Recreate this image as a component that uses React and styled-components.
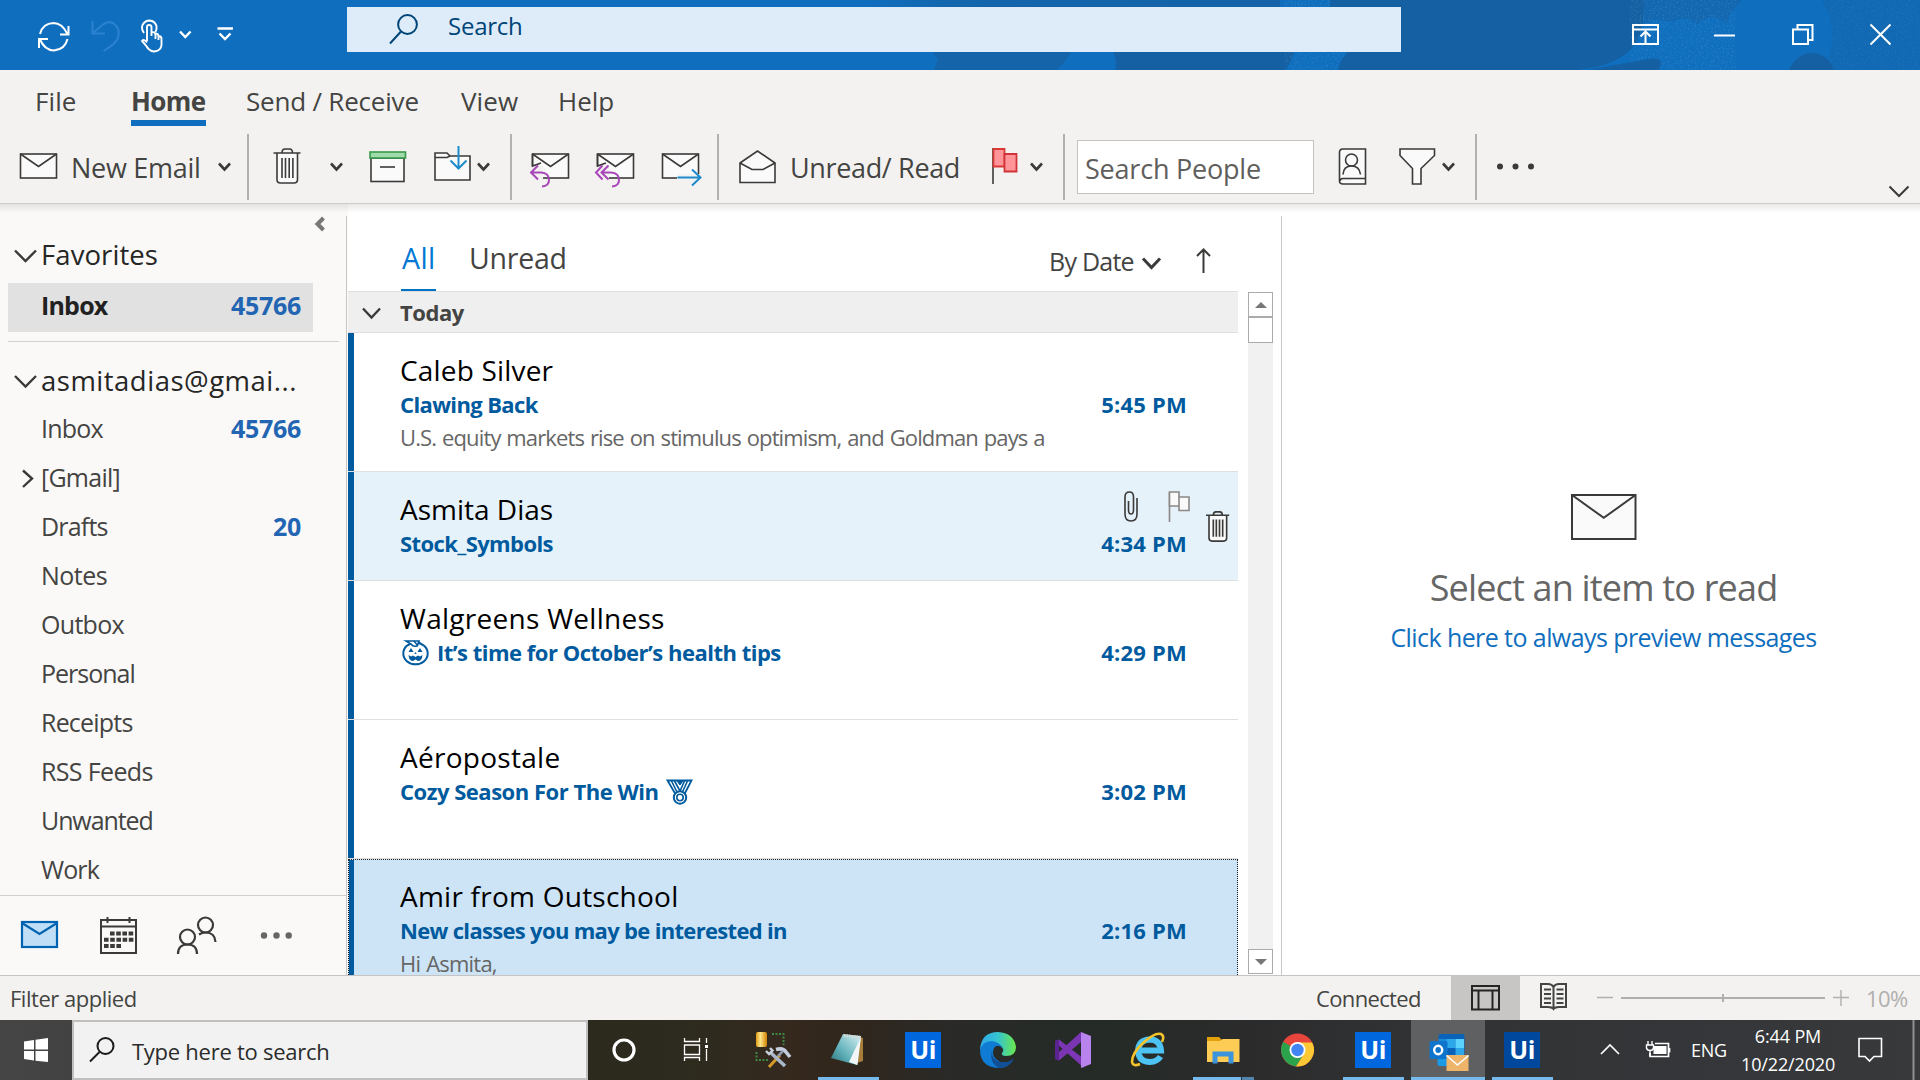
import React from 'react';
import styled, { createGlobalStyle, css } from 'styled-components';

const GlobalStyle = createGlobalStyle`
  *, *::before, *::after { box-sizing: border-box; }
  body { margin: 0; overflow: hidden; background: #fff; }
`;

const ink = '#444442';
const blue = '#106ebe';
const deep = '#005a9e';

const Window = styled.div`
  width: 1920px;
  height: 1080px;
  display: flex;
  flex-direction: column;
  overflow: hidden;
  font-family: 'Open Sans', 'Noto Sans', sans-serif;
  color: ${ink};
  background: #fff;
  white-space: nowrap;
`;

const Svg = styled.svg`
  display: block;
  flex: none;
  fill: none;
  stroke: ${(p) => p.$color || '#3b3a39'};
  stroke-width: ${(p) => p.$sw || 1.6};
`;

/* Icon cell: the view box starts at (x, y) of the window grid the strokes are drawn on. */
const Cell = ({ x, y, w, h, color, sw, children }) => (
  <Svg width={w} height={h} viewBox={`${x} ${y} ${w} ${h}`} $color={color} $sw={sw}>
    {children}
  </Svg>
);

const Text = styled.span`
  display: block;
  flex: none;
  width: ${(p) => (p.$w ? `${p.$w}px` : 'auto')};
  letter-spacing: ${(p) => p.$ls || 0}px;
`;

/* ---------- Title bar ---------- */
const TitleBar = styled.header`
  position: relative;
  isolation: isolate;
  height: 70px;
  flex: none;
  display: flex;
  background: ${blue};
`;
const TitleArt = styled.svg`
  position: absolute;
  z-index: -1;
  top: 0;
  right: 0;
`;
const QuickTools = styled.div`
  display: flex;
  width: 347px;
  padding-left: 20px;
`;
const SearchBox = styled.div`
  display: flex;
  width: 1054px;
  height: 45px;
  margin-top: 7px;
  background: #deecf9;
  color: #004578;
  font-size: 24px;
  line-height: 38px;
`;
const WindowButtons = styled.div`
  display: flex;
  margin-left: auto;
`;

const Art = () => (
  <TitleArt width="1100" height="70" viewBox="820 0 1100 70">
    <defs>
      <linearGradient id="fade" x1="0" x2="1">
        <stop offset="0" stopColor="#1560a2" stopOpacity="0" />
        <stop offset=".2" stopColor="#1560a2" stopOpacity=".65" />
        <stop offset="1" stopColor="#1560a2" stopOpacity=".8" />
      </linearGradient>
      <filter id="grain" x="0" y="0" width="100%" height="100%">
        <feTurbulence type="fractalNoise" baseFrequency=".6" numOctaves="2" seed="4" />
        <feColorMatrix values="0 0 0 0 .08  0 0 0 0 .38  0 0 0 0 .64  0 0 0 4 -2" />
      </filter>
    </defs>
    <rect x="870" y="0" width="410" height="10" fill="url(#fade)" />
    <path d="M932 50L938 60L934 70H1056Q1066 62 1072 50Z" fill="#1563a8" />
    <path d="M1112 50Q1118 60 1115 70H1286Q1292 60 1295 50Z" fill="#1560a2" />
    <rect x="1285" y="0" width="60" height="70" filter="url(#grain)" opacity=".25" />
    <path d="M1330 0H1644Q1646 36 1628 52Q1612 66 1578 70H1338Q1340 58 1350 50H1330Z" fill="#1560a2" />
    <path d="M1644 0H1742Q1730 12 1726 24Q1712 10 1698 24Q1684 14 1672 22Q1655 16 1644 24Z" fill="#1560a2" opacity=".5" />
    <rect x="1630" y="0" width="106" height="70" filter="url(#grain)" opacity=".25" />
    <path d="M1588 70L1648 59Q1661 57 1661 63L1659 70Z" fill="#1560a2" />
    <rect x="1815" y="0" width="105" height="70" fill="#1560a2" opacity=".4" />
    <rect x="1815" y="0" width="105" height="70" filter="url(#grain)" opacity=".15" />
    <ellipse cx="1783" cy="36" rx="49" ry="58" fill={blue} />
    <path d="M1789 70Q1797 53 1812 53Q1827 53 1834 70Z" fill="#1560a2" />
  </TitleArt>
);

/* ---------- Ribbon ---------- */
const Tabs = styled.nav`
  display: flex;
  align-items: flex-start;
  height: 64px;
  flex: none;
  padding-left: 35px;
  background: #f3f2f1;
`;
const Tab = styled.div`
  width: ${(p) => p.$w}px;
  margin-right: ${(p) => p.$gap}px;
  padding-top: 12px;
  border-bottom: 6px solid ${(p) => (p.$active ? blue : 'transparent')};
  font-size: 26px;
  line-height: 38px;
  letter-spacing: ${(p) => p.$ls}px;
  font-weight: ${(p) => (p.$active ? 700 : 400)};
`;
const Ribbon = styled.div`
  position: relative;
  z-index: 1;
  display: flex;
  align-items: flex-start;
  height: 70px;
  flex: none;
  background: #f3f2f1;
  border-bottom: 1px solid #cdcbc9;
  font-size: 27px;
  line-height: 67px;
  &::after {
    content: '';
    position: absolute;
    left: 0;
    right: 0;
    top: 70px;
    height: 9px;
    background: linear-gradient(rgba(0, 0, 0, 0.09), rgba(0, 0, 0, 0));
  }
`;
const Divider = styled.i`
  flex: none;
  width: 2px;
  height: 66px;
  background: #b3b0ad;
`;
const PeopleSearch = styled.div`
  width: 237px;
  height: 54px;
  margin: 6px 0 0 12px;
  padding-left: 7px;
  border: 1px solid #c4c2c0;
  background: #fff;
  color: #605e5c;
  line-height: 55px;
  letter-spacing: -0.21px;
`;

const RCell = (p) => <Cell y={134} h={66} {...p} />;
const Chevron = ({ x, y }) => <path d={`M${x} ${y}l5.5 6l5.5-6`} strokeWidth="2.6" />;
const Envelope = ({ x, y, w = 36, h = 24 }) => (
  <>
    <rect x={x} y={y} width={w} height={h} fill="#fafafa" />
    <path d={`M${x} ${y}l${w / 2} ${h * 0.52}l${w / 2} ${-h * 0.52}`} />
  </>
);
const Trash = ({ x, y, s = 1 }) => (
  <g transform={`translate(${x} ${y}) scale(${s})`}>
    <path d="M3.5 5V31.500q0 3.500 3.500 3.500h13.500q3.500 0 3.500-3.500V5" fill="#fafafa" />
    <path d="M0 5H27M8.500 5q0-4 3-4h4.500q3 0 3 4M8.500 10V30M12 10V30M15.700 10V30M19.400 10V30" />
  </g>
);

const RibbonBar = () => (
  <Ribbon>
    <RCell x={0} w={71}><Envelope x={20.5} y={154} /></RCell>
    <Text $w={137} $ls={-0.28}>New Email</Text>
    <RCell x={208} w={39}><Chevron x={219} y={163.500} /></RCell>
    <Divider />
    <RCell x={249} w={61}><Trash x={273.500} y={148} /></RCell>
    <RCell x={310} w={45}><Chevron x={331} y={163.500} /></RCell>
    <RCell x={355} w={65}>
      <rect x="371" y="158" width="33" height="23.500" fill="#fafafa" />
      <rect x="370" y="152" width="35.500" height="6" fill="#9fdcaa" stroke="#379a4b" />
      <path d="M380 167H395" />
    </RCell>
    <RCell x={420} w={90}>
      <path d="M435 180V153H447L450 156H470V180Z" fill="#fafafa" />
      <path d="M435 157.500H447L450 156" />
      <path d="M458.500 146V168M450.500 160.500L458.500 168.500L466.500 160.500" stroke="#1e8bcd" strokeWidth="2" />
      <Chevron x={478} y={163.500} />
    </RCell>
    <Divider />
    <RCell x={512} w={70}>
      <Envelope x={532.500} y={154} />
      <path d="M529 166H543V180H529Z" fill="#f3f2f1" stroke="none" />
      <path d="M532.500 154V166L541 163" />
      <path d="M538 165.500L531 172.500L538 179.500M531 172.500H541Q549 173 549 180Q549 186 542 186.500" stroke="#a846b9" strokeWidth="2" />
    </RCell>
    <RCell x={582} w={66}>
      <Envelope x={597.500} y={154} />
      <path d="M595 166H609V180H595Z" fill="#f3f2f1" stroke="none" />
      <path d="M597.500 154V166L606 163" />
      <path d="M602.500 165.500L596 172.500L602.500 179.500M608.500 165.500L601.500 172.500L608.500 179.500M601.500 172.500H611Q619 173 619 180Q619 186 612 186.500" stroke="#a846b9" strokeWidth="2" />
    </RCell>
    <RCell x={648} w={69}>
      <Envelope x={662.500} y={154} />
      <path d="M677 174H703V182H677Z" fill="#f3f2f1" stroke="none" />
      <path d="M677.500 177.500H700M692 169.500L700.500 177.500L692 185.500" stroke="#1e8bcd" strokeWidth="2" />
    </RCell>
    <Divider />
    <RCell x={719} w={71}>
      <path d="M740 163L757.500 151L775 163V182.500H740Z" fill="#fafafa" />
      <path d="M740 163L752 169.500H763L775 163" />
    </RCell>
    <Text $w={188} $ls={-0.35}>Unread/ Read</Text>
    <RCell x={978} w={85}>
      <path d="M993 148V184" />
      <path d="M993.500 149H1004.500V166.500H993.500Z" fill="#ff9599" stroke="#d93a35" strokeWidth="1.800" />
      <path d="M1004.500 154H1016.500V171.500H1004.500Z" fill="#ff9599" stroke="#d13438" strokeWidth="1.800" />
      <Chevron x={1031} y={163.500} />
    </RCell>
    <Divider />
    <PeopleSearch>Search People</PeopleSearch>
    <RCell x={1314} w={71}>
      <path d="M1365.500 149H1343Q1339.500 149 1339.500 152.500V181Q1339.500 184 1343 184H1365.500ZM1340 181Q1340 178.500 1343 178.500H1365.500" fill="#fafafa" />
      <ellipse cx="1351.500" cy="160" rx="6" ry="6" />
      <path d="M1343 174.500Q1343.500 166 1351.500 166Q1359.500 166 1360.500 174.500" />
    </RCell>
    <RCell x={1385} w={90}>
      <path d="M1400 149H1434.500V155.500L1421 168.500V184H1412.500V168.500L1400 155.500Z" fill="#fafafa" />
      <Chevron x={1443} y={163.500} />
    </RCell>
    <Divider />
    <RCell x={1477} w={400}>
      <g fill="#3b3a39" stroke="none">
        <circle cx="1500" cy="166.500" r="3" /><circle cx="1515.500" cy="166.500" r="3" /><circle cx="1531" cy="166.500" r="3" />
      </g>
    </RCell>
    <RCell x={1877} w={43}><path d="M1889.500 186.500L1899 196L1908.500 186.500" strokeWidth="2" /></RCell>
  </Ribbon>
);

/* ---------- Body ---------- */
const Body = styled.main`
  display: flex;
  height: 771px;
  flex: none;
`;
const Sidebar = styled.aside`
  display: flex;
  flex-direction: column;
  width: 346px;
  background: #faf9f8;
`;
const PaneEdge = styled.i`
  flex: none;
  width: ${(p) => p.$w}px;
  padding-top: 12px;
  background: ${(p) => p.$bg};
  &::before {
    content: '';
    display: block;
    width: 1px;
    height: 759px;
    background: #c9c7c5;
  }
`;
const SectionTitle = styled.div`
  display: flex;
  height: ${(p) => p.$h}px;
  padding-top: ${(p) => p.$pt || 0}px;
  color: #262625;
  font-size: 27.5px;
  line-height: 35px;
`;
const Folder = styled.div`
  display: flex;
  flex: none;
  width: 305px;
  height: 49px;
  margin-left: 8px;
  padding-right: 12px;
  background: ${(p) => (p.$selected ? '#e1e1e1' : 'transparent')};
  color: ${(p) => (p.$selected ? '#212121' : ink)};
  font-size: 25px;
  font-weight: ${(p) => (p.$selected ? 700 : 400)};
  line-height: 45px;
`;
const Count = styled.span`
  margin-left: auto;
  color: #2266b3;
  font-weight: 700;
  letter-spacing: -0.29px;
`;
const Rule = styled.i`
  flex: none;
  height: 1px;
  margin: 9px 7px 0 8px;
  background: #d2d0ce;
`;
const FolderList = styled.div`
  height: 489px;
  flex: none;
  overflow: hidden;
`;
const NavBar = styled.div`
  display: flex;
  height: 80px;
  border-top: 1px solid #d2d0ce;
`;

const folders = [
  { name: 'Inbox', ls: -0.8, count: '45766' },
  { name: '[Gmail]', ls: -0.75, open: true },
  { name: 'Drafts', ls: -0.8, count: '20' },
  { name: 'Notes', ls: -0.5 },
  { name: 'Outbox', ls: -0.7 },
  { name: 'Personal', ls: -1 },
  { name: 'Receipts', ls: -0.8 },
  { name: 'RSS Feeds', ls: -0.65 },
  { name: 'Unwanted', ls: -1.1 },
  { name: 'Work', ls: -0.9 },
];

const NCell = (p) => <Cell y={896} h={79} {...p} />;

const FolderPane = () => (
  <Sidebar>
    <Cell x={0} y={204} w={346} h={33} color="#777">
      <path d="M323.500 218L317.500 224L323.500 230" strokeWidth="4" />
    </Cell>
    <SectionTitle $h={46}>
      <Cell x={0} y={237} w={41} h={40}><path d="M15 250.500L25.500 261L36 250.500" strokeWidth="2.400" /></Cell>
      <Text $ls={0.08}>Favorites</Text>
    </SectionTitle>
    <Folder $selected>
      <Cell x={8} y={0} w={33} h={49} />
      <Text $ls={-0.8}>Inbox</Text>
      <Count>45766</Count>
    </Folder>
    <Rule />
    <SectionTitle $h={64} $pt={21}>
      <Cell x={0} y={363} w={41} h={40}><path d="M15 376L25.500 386.500L36 376" strokeWidth="2.400" /></Cell>
      <Text $ls={0.5}>asmitadias@gmai...</Text>
    </SectionTitle>
    <FolderList>
      {folders.map((f) => (
        <Folder key={f.name}>
          <Cell x={8} y={455} w={33} h={49}>
            {f.open && <path d="M23 470.500L32 478.500L23 487" strokeWidth="2.400" />}
          </Cell>
          <Text $ls={f.ls}>{f.name}</Text>
          {f.count && <Count>{f.count}</Count>}
        </Folder>
      ))}
    </FolderList>
    <NavBar>
      <NCell x={0} w={80} color="#0063b1">
        <rect x="22" y="922" width="35" height="25" fill="#c0def5" strokeWidth="2.200" />
        <path d="M22 923L39.500 934L57 923" strokeWidth="2.200" />
      </NCell>
      <NCell x={80} w={78}>
        <rect x="101" y="920" width="35" height="33" strokeWidth="2" />
        <path d="M101 926.500H136M107.500 917V923M129.500 917V923" strokeWidth="2" />
        <path d="M110 933.500H134M104 939.700H134M104 945.900H121" strokeWidth="4" strokeDasharray="4.600 1.600" />
      </NCell>
      <NCell x={158} w={88} sw={2.2}>
        <ellipse cx="187.500" cy="937" rx="7.500" ry="7.500" />
        <path d="M178 954Q178 944.500 187.500 944.500Q197 944.500 197 954" />
        <ellipse cx="205.500" cy="925" rx="7.500" ry="7.500" />
        <path d="M199 934.500Q202 932.500 205.500 932.500Q215 932.500 215.500 942" />
      </NCell>
      <NCell x={246} w={99} color="none">
        <g fill="#666">
          <circle cx="264" cy="935.500" r="3.200" /><circle cx="276.500" cy="935.500" r="3.200" /><circle cx="288.700" cy="935.500" r="3.200" />
        </g>
      </NCell>
    </NavBar>
  </Sidebar>
);

/* ---------- Message list ---------- */
const ListPane = styled.section`
  display: flex;
  flex-direction: column;
  width: 933px;
`;
const FilterRow = styled.div`
  display: flex;
  align-items: flex-start;
  height: 87px;
  padding-left: 53px;
  font-size: 28.5px;
  line-height: 60px;
`;
const FilterTab = styled.div`
  width: ${(p) => p.$w}px;
  height: 87px;
  margin-right: 32px;
  padding: 24px 0 0 1px;
  color: ${(p) => (p.$active ? '#0078d4' : ink)};
  border-bottom: 2px solid ${(p) => (p.$active ? '#0072c6' : 'transparent')};
  letter-spacing: ${(p) => p.$ls}px;
`;
const SortBy = styled.div`
  display: flex;
  margin-left: 448px;
  padding-top: 27px;
  font-size: 25px;
`;
const ListArea = styled.div`
  display: flex;
  height: 684px;
`;
const Messages = styled.div`
  width: 890px;
  height: 684px;
  overflow: hidden;
`;
const GroupHeader = styled.div`
  display: flex;
  height: 42px;
  border: solid #dedede;
  border-width: 1px 0;
  background: #efefef;
  font-size: 22px;
  font-weight: 700;
  line-height: 41px;
`;
const Message = styled.article`
  display: flex;
  height: ${(p) => p.$h}px;
  border-bottom: 1px solid #dfdfdf;
  background: ${(p) => p.$bg || '#fff'};
  ${(p) => p.$focused && css`
    border: 1px dotted #222;
    border-bottom: 0;
  `}
`;
const UnreadBar = styled.i`
  flex: none;
  width: ${(p) => (p.$focused ? 5 : 6)}px;
  background: ${deep};
`;
const Summary = styled.div`
  flex: 1;
  padding: ${(p) => (p.$focused ? 19 : 20)}px 0 0 46px;
`;
const Sender = styled.div`
  color: #000;
  font-size: 28px;
  line-height: 34px;
  letter-spacing: ${(p) => p.$ls}px;
`;
const Subject = styled.div`
  display: flex;
  color: ${deep};
  font-size: 22px;
  font-weight: 700;
  line-height: 35px;
`;
const Preview = styled.div`
  color: #666;
  font-size: 22px;
  line-height: 31px;
  letter-spacing: ${(p) => p.$ls}px;
  word-spacing: 1px;
`;
const Meta = styled.div`
  display: flex;
  flex-direction: column;
  width: 98px;
  height: 100px;
  margin-top: ${(p) => (p.$focused ? -1 : 0)}px;
`;
const Flags = styled.div`
  height: 54px;
`;
const Time = styled.div`
  padding-right: 4px;
  text-align: right;
  color: ${deep};
  font-size: 22px;
  font-weight: 700;
  line-height: 35px;
  letter-spacing: 0.2px;
`;
const RowAction = styled.div`
  width: ${(p) => (p.$focused ? 46 : 47)}px;
`;

const Pumpkin = () => (
  <Cell x={400} y={636} w={37} h={35} color={deep}>
    <ellipse cx="415.500" cy="654.500" rx="12.200" ry="10.800" strokeWidth="2" />
    <path d="M406 642H419L417 647Q413 648 411 645Z" strokeWidth="1.600" fill="#fff" />
    <path d="M414 642L418 647M419 643L421 645" strokeWidth="1.400" />
    <g fill={deep} stroke="none">
      <path d="M408.500 653L411 649L413.500 653ZM417.500 653L420 649L422.500 653ZM414.300 655L415.500 653L416.700 655Z" />
      <path d="M408.500 656L411 657.500L413 656.500L415.500 658L418 656.500L420 657.500L422.500 656Q422 662 418 662L415.500 660.500L413 662Q409 662 408.500 656Z" />
    </g>
  </Cell>
);
const Medal = () => (
  <Cell x={658} y={774} w={38} h={35} color={deep}>
    <path d="M667.500 780.500H691.500L684 795H676Z" strokeWidth="1.800" />
    <path d="M671.500 781L678 794M687.500 781L681.500 794M674.500 781L680 791L684.500 781" strokeWidth="1.600" />
    <path d="M677 781L680 785L683 781Z" fill={deep} strokeWidth="1" />
    <circle cx="680" cy="797.500" r="6.200" fill="#fff" strokeWidth="2" />
    <circle cx="680" cy="797.500" r="3.200" strokeWidth="1.600" />
  </Cell>
);

const mails = [
  { from: 'Caleb Silver', ls: 0.18, subject: 'Clawing Back', sls: -0.62, time: '5:45 PM', h: 139, preview: 'U.S. equity markets rise on stimulus optimism, and Goldman pays a', pls: -0.87 },
  { from: 'Asmita Dias', ls: 0, subject: 'Stock_Symbols', sls: -0.6, time: '4:34 PM', h: 109, bg: '#e5f2fa', hover: true },
  { from: 'Walgreens Wellness', ls: 0.28, subject: 'It’s time for October’s health tips', sls: -0.5, time: '4:29 PM', h: 139, before: <Pumpkin /> },
  { from: 'Aéropostale', ls: 0.28, subject: 'Cozy Season For The Win', sls: -0.48, time: '3:02 PM', h: 139, after: <Medal /> },
  { from: 'Amir from Outschool', ls: 0.24, subject: 'New classes you may be interested in', sls: -0.68, time: '2:16 PM', h: 116, bg: '#cde4f7', focused: true, preview: 'Hi Asmita,', pls: -0.78 },
];

const Scrollbar = styled.div`
  display: flex;
  flex-direction: column;
  width: 25px;
  height: 682px;
  margin: 1px 0 0 10px;
  background: #f1f1f1;
`;
const ScrollButton = styled.div`
  display: flex;
  align-items: center;
  justify-content: center;
  height: ${(p) => p.$h}px;
  margin-top: ${(p) => (p.$end ? 'auto' : 0)};
  border: 1px solid #ababab;
  background: #fff;
`;
const Arrow = styled.i`
  border: solid transparent;
  border-width: 0 6px;
  ${(p) => (p.$down ? 'border-top: 6px solid #777;' : 'border-bottom: 6px solid #777;')}
`;

const Messaging = () => (
  <ListPane>
    <FilterRow>
      <FilterTab $active $w={35} $ls={0.4}>All</FilterTab>
      <FilterTab $w={101} $ls={-0.25}>Unread</FilterTab>
      <SortBy>
        <Text $w={84} $ls={-0.75}>By Date</Text>
        <Cell x={1133} y={231} w={47} h={60}><path d="M1143 258.500L1151.500 267.500L1160 258.500" strokeWidth="3" /></Cell>
        <Cell x={1180} y={231} w={47} h={60}><path d="M1203.500 249V273M1197 256L1203.500 249.500L1210 256" strokeWidth="2" /></Cell>
      </SortBy>
    </FilterRow>
    <ListArea>
      <Messages>
        <GroupHeader>
          <Cell x={348} y={292} w={52} h={40}><path d="M363 308.500L371.500 317.500L380 308.500" strokeWidth="2.400" /></Cell>
          <Text $ls={-0.45}>Today</Text>
        </GroupHeader>
        {mails.map((m) => (
          <Message key={m.from} $h={m.h} $bg={m.bg} $focused={m.focused}>
            <UnreadBar $focused={m.focused} />
            <Summary $focused={m.focused}>
              <Sender $ls={m.ls}>{m.from}</Sender>
              <Subject>{m.before}<Text $ls={m.sls}>{m.subject}</Text>{m.after}</Subject>
              {m.preview && <Preview $ls={m.pls}>{m.preview}</Preview>}
            </Summary>
            <Meta $focused={m.focused}>
              <Flags>
                {m.hover && (
                  <Cell x={1093} y={472} w={98} h={54}>
                    <path d="M1125 497V514Q1125 521 1131 521Q1137 521 1137 514V498M1125 499V497Q1125 492 1129.500 492Q1133.500 492 1133.500 497V510Q1133.500 514 1131 514Q1128.500 514 1128.500 510V501" />
                    <g stroke="#8a8886" fill="#fafafa">
                      <path d="M1169.500 522V492" />
                      <path d="M1169.500 492H1179V506H1169.500ZM1179 497H1189V510.500H1179Z" />
                    </g>
                  </Cell>
                )}
              </Flags>
              <Time>{m.time}</Time>
            </Meta>
            <RowAction $focused={m.focused}>
              {m.hover && <Cell x={1191} y={472} w={47} h={108} sw={1.9}><Trash x={1206} y={511} s={0.86} /></Cell>}
            </RowAction>
          </Message>
        ))}
      </Messages>
      <Scrollbar>
        <ScrollButton $h={25}><Arrow /></ScrollButton>
        <ScrollButton $h={26} />
        <ScrollButton $h={25} $end><Arrow $down /></ScrollButton>
      </Scrollbar>
    </ListArea>
  </ListPane>
);

/* ---------- Reading pane ---------- */
const ReadingPane = styled.section`
  display: flex;
  flex-direction: column;
  align-items: center;
  width: 638px;
  padding: 289px 0 0 5px;
  color: #666;
`;
const Prompt = styled.div`
  margin-top: 25px;
  font-size: 36px;
  line-height: 46px;
  letter-spacing: -0.82px;
`;
const PreviewLink = styled.div`
  margin-top: 8px;
  color: #106ebe;
  font-size: 25px;
  line-height: 36px;
  letter-spacing: -0.58px;
`;

/* ---------- Status bar ---------- */
const StatusBar = styled.footer`
  display: flex;
  height: 45px;
  flex: none;
  border-top: 1px solid #c6c4c2;
  background: #f3f2f1;
  font-size: 22px;
  line-height: 45px;
`;
const StatusText = styled.span`
  width: ${(p) => p.$w}px;
  padding-left: ${(p) => p.$pl}px;
  color: ${(p) => p.$color || ink};
  letter-spacing: ${(p) => p.$ls}px;
`;
const ViewButton = styled.div`
  width: 69px;
  background: ${(p) => (p.$active ? '#c8c6c4' : 'transparent')};
`;
const SCell = (p) => <Cell y={976} h={44} {...p} />;

/* ---------- Taskbar ---------- */
const Taskbar = styled.footer`
  display: flex;
  height: 60px;
  flex: none;
  background: linear-gradient(90deg, #454545 0, #424242 72px, #2b2a1d 588px, #2d2b1f 680px, #35291e 790px, #30261c 850px, #2a2a28 950px, #242b26 1090px, #2b2b2c 1240px, #313233 1400px, #343639 1700px, #37393b 1920px);
  color: #fff;
`;
const TaskSearch = styled.div`
  display: flex;
  width: 516px;
  border: 2px solid #c0c0c0;
  background: #f2f2f2;
  color: #2b2b2b;
  font-size: 22px;
  line-height: 59px;
  letter-spacing: -0.26px;
`;
const TaskButton = styled.div`
  display: flex;
  flex-direction: column;
  width: ${(p) => p.$w || 75}px;
  height: 60px;
  background: ${(p) => (p.$active ? '#5f6061' : 'transparent')};
`;
const Marks = styled.div`
  display: flex;
  gap: 1px;
  margin-left: ${(p) => (p.$flush ? 0 : 7)}px;
`;
const RunningMark = styled.i`
  width: ${(p) => p.$w || 61}px;
  height: 3px;
  background: ${(p) => p.$bg || '#76b9ed'};
`;
const UiTile = styled.div`
  width: 36px;
  height: 36px;
  margin: 12px 0 9px 19px;
  background: ${(p) => p.$bg};
  font: 700 25px/35px 'Open Sans', sans-serif;
  letter-spacing: -0.5px;
  text-align: center;
`;
const Language = styled.span`
  width: 50px;
  font-size: 18px;
  line-height: 61px;
  letter-spacing: -0.28px;
`;
const Clock = styled.div`
  width: 94px;
  padding-top: 2px;
  font-size: 18px;
  line-height: 28px;
  letter-spacing: -0.14px;
  text-align: center;
`;
const TCell = (p) => <Cell y={1020} h={57} {...p} />;

const Tasks = () => (
  <Taskbar>
    <TCell x={0} w={72} color="none">
      <path d="M24 1041.500L34 1040V1049.500H24ZM35.500 1039.800L48 1038V1049.500H35.500ZM24 1051H34V1060.500L24 1059ZM35.500 1051H48V1062L35.500 1060.700Z" fill="#fff" />
    </TCell>
    <TaskSearch>
      <Cell x={74} y={1022} w={58} h={56} color="#1b1b1b" sw={2}>
        <circle cx="105.500" cy="1046" r="8" />
        <path d="M99.500 1052L90 1061.500" />
      </Cell>
      Type here to search
    </TaskSearch>
    <TaskButton $w={72}>
      <TCell x={588} w={72} color="#fff" sw={3.2}><circle cx="624" cy="1050" r="10" /></TCell>
    </TaskButton>
    <TaskButton>
      <TCell x={660} w={75} color="#fff" sw={1.3}>
        <path d="M684.500 1038V1041.500H699.500V1038M684.500 1061V1057.500H699.500V1061M684.500 1045H699.500V1054.500H684.500ZM706.500 1038V1043M706.500 1049V1061" />
        <rect x="705" y="1045" width="3" height="3" fill="#fff" stroke="none" />
      </TCell>
    </TaskButton>
    <TaskButton $w={76}>
      <TCell x={735} w={75} color="none">
        <defs>
          <linearGradient id="gold" x1="0" x2="1"><stop offset="0" stopColor="#e09c10" /><stop offset=".4" stopColor="#ffe58a" /><stop offset="1" stopColor="#d08200" /></linearGradient>
        </defs>
        <rect x="756" y="1032" width="11" height="15" rx="2" fill="url(#gold)" />
        <path d="M772 1034H783.500V1045M756.500 1052V1060H768" stroke="#3d8a42" strokeWidth="2" strokeDasharray="2 1.500" />
        <path d="M769 1067L780 1055" stroke="#d59b2a" strokeWidth="3" />
        <path d="M770 1052L785 1066" stroke="#aab6ca" strokeWidth="3.600" />
        <path d="M766 1051L769 1054L772.500 1050.500L770 1048" stroke="#c8d1de" strokeWidth="2.400" />
        <path d="M776 1049.500Q783 1047.500 786 1052L790 1057" stroke="#c5cedd" strokeWidth="3.600" />
        <path d="M783 1051L778 1056" stroke="#8f9bb0" strokeWidth="2.500" />
      </TCell>
    </TaskButton>
    <TaskButton>
      <TCell x={811} w={75} color="none">
        <defs>
          <linearGradient id="page" x1="1" y1="0" x2="0" y2="1"><stop offset="0" stopColor="#d9f2f4" /><stop offset=".6" stopColor="#5fb0b9" /><stop offset="1" stopColor="#2b6f78" /></linearGradient>
        </defs>
        <path d="M860 1037L863 1038V1061L857 1063Z" fill="#a77d3a" />
        <path d="M843 1034L861 1036L857 1065L831 1058Z" fill="url(#page)" />
        <path d="M861 1037L857.500 1065L849 1062Z" fill="#f2f6f7" />
        <path d="M844 1035.500L861 1037.500" stroke="#d7d7d7" strokeWidth="3" strokeDasharray="1.500 1" />
      </TCell>
      <Marks><RunningMark /></Marks>
    </TaskButton>
    <TaskButton><UiTile $bg="#0067df">Ui</UiTile></TaskButton>
    <TaskButton>
      <TCell x={961} w={75} color="none">
        <defs>
          <linearGradient id="edgeTop" x1="0" x2="1"><stop offset="0" stopColor="#2fa8ea" /><stop offset=".5" stopColor="#35c4cf" /><stop offset="1" stopColor="#6be84a" /></linearGradient>
        </defs>
        <path d="M980 1050Q981 1032 998 1032Q1014 1033 1016 1047Q1016 1056 1006 1056Q1001 1056 1002 1053Q1005 1050 1001 1046Q994 1039 985 1044Z" fill="url(#edgeTop)" />
        <path d="M980 1051Q982 1041 992 1041Q1000 1042 1003 1049Q998 1043 994 1048Q990 1056 1000 1062Q1008 1064 1013.500 1059Q1009 1068 998 1068Q981 1067 980 1051Z" fill="#0f7bd3" />
        <path d="M992 1051Q991 1060 1001 1062Q1009 1063 1014 1058.500Q1009 1068 999 1068Q989 1063 992 1051Z" fill="#114f97" />
      </TCell>
    </TaskButton>
    <TaskButton>
      <TCell x={1036} w={75} color="none">
        <path d="M1055 1041L1059 1039.500L1084 1059V1068L1056 1043Z" fill="#7d36b5" />
        <path d="M1055 1041V1059L1059 1060.500L1081 1042V1032L1059 1052V1045Z" fill="#7a35b3" />
        <path d="M1055 1041L1059 1039.500V1060.500L1055 1059Z" fill="#5b2390" />
        <path d="M1081 1032L1091 1036V1064L1081 1068Z" fill="#b983ee" />
      </TCell>
    </TaskButton>
    <TaskButton>
      <TCell x={1111} w={75} color="none">
        <path d="M1138 1050.500H1161Q1160 1039.500 1149.500 1039.500Q1138.500 1040 1138 1051Q1139 1062 1150 1062Q1157 1062 1160.500 1056.500" stroke="#4cc3f3" strokeWidth="6" />
        <path d="M1140 1064Q1133 1067 1132 1062Q1132 1053 1143 1043Q1155 1032 1161 1034Q1165 1036 1162 1042" stroke="#f5c32c" strokeWidth="2.600" />
      </TCell>
    </TaskButton>
    <TaskButton>
      <TCell x={1186} w={75} color="none">
        <path d="M1207 1037H1219L1222 1040H1221V1046H1207Z" fill="#e2a10c" />
        <path d="M1207 1041H1220L1222.500 1039H1239.500V1062H1207Z" fill="#fccc55" />
        <path d="M1212.500 1063.500V1051.500H1233.500V1063.500H1228.500V1056.500H1217.500V1063.500Z" fill="#3b94dc" />
      </TCell>
      <Marks><RunningMark $w={48} /><RunningMark $w={12} $bg="#5285ad" /></Marks>
    </TaskButton>
    <TaskButton>
      <TCell x={1261} w={75} color="none">
        <circle cx="1297.500" cy="1050" r="16.500" fill="#e8453c" />
        <path d="M1297.500 1050L1283.200 1041.800A16.500 16.500 0 0 0 1296 1066.400L1304 1054Z" fill="#2ba24c" />
        <path d="M1297.500 1042.500H1312.200A16.500 16.500 0 0 1 1296 1066.400L1304 1054Z" fill="#fcc934" />
        <circle cx="1297.500" cy="1050" r="8" fill="#fff" />
        <circle cx="1297.500" cy="1050" r="6.200" fill="#4285f4" />
      </TCell>
    </TaskButton>
    <TaskButton><UiTile $bg="#0067df">Ui</UiTile><Marks><RunningMark /></Marks></TaskButton>
    <TaskButton $active $w={74}>
      <TCell x={1411.5} w={73} color="none">
        <rect x="1439" y="1034" width="26" height="32" rx="2" fill="#0a63b8" />
        <path d="M1439 1039H1448V1048H1439Z" fill="#1a8ad6" />
        <path d="M1447 1039H1456V1048H1447Z" fill="#2ba7ea" />
        <path d="M1456 1039H1464.500V1048H1456Z" fill="#5ad2fb" />
        <path d="M1456 1048H1464.500V1056H1456Z" fill="#2ba7ea" />
        <path d="M1438 1058H1450V1066H1440Q1438 1066 1438 1064Z" fill="#1a9ae6" />
        <rect x="1430" y="1041" width="18" height="18" rx="1.500" fill="#0f74cc" />
        <ellipse cx="1438.700" cy="1050" rx="4" ry="4.200" stroke="#fff" strokeWidth="2.400" />
        <rect x="1447" y="1055" width="22" height="16" fill="#edb46a" />
        <path d="M1447 1055.500L1458 1065L1469 1055.500" stroke="#fff" strokeWidth="1.600" />
      </TCell>
      <Marks $flush><RunningMark $w={74} /></Marks>
    </TaskButton>
    <TaskButton><UiTile $bg="#00489d">Ui</UiTile><Marks><RunningMark /></Marks></TaskButton>
    <TCell x={1560} w={131} color="#fff" sw={1.7}>
      <path d="M1601 1054L1610 1045L1619 1054" />
      <path d="M1655 1043.500H1668.500V1056.500H1650V1053M1669.500 1048V1052.500" />
      <rect x="1653.500" y="1046" width="13" height="8" fill="#fff" stroke="none" />
      <path d="M1648 1041V1045M1652 1041V1045M1646.500 1045H1653.500V1048Q1653 1050.500 1650 1050.500Q1647 1050.500 1646.500 1048ZM1650 1050.500V1056" strokeWidth="1.400" />
    </TCell>
    <Language>ENG</Language>
    <Clock>
      <div>6:44 PM</div>
      <div>10/22/2020</div>
    </Clock>
    <Cell x={1835} y={1020} w={85} h={60} color="#fff" sw={1.6}>
      <path d="M1859 1038.500H1881.500V1056.500H1874L1869.500 1061L1865 1056.500H1859Z" />
      <path d="M1913.500 1020V1080" stroke="#909192" strokeWidth="2" />
    </Cell>
  </Taskbar>
);

export default function App() {
  return (
    <Window>
      <GlobalStyle />
      <TitleBar>
        <Art />
        <QuickTools>
          <Cell x={20} y={0} w={60} h={70} color="#fff" sw={2}>
            <path d="M40 34Q42.500 23.500 53.500 23Q62 23 67.500 34M68.500 26V34.500H60M67.500 39Q65 49.500 54 50.500Q44.500 50 40 39.500M39 48V39H48" />
          </Cell>
          <Cell x={80} y={0} w={50} h={70} color="#2b82d0" sw={2}>
            <path d="M92.500 21V33.500H105M93 33L103 24.500Q109 20 114.500 24Q121 30 117.500 39Q114 45 103.500 51" />
          </Cell>
          <Cell x={130} y={0} w={40} h={70} color="#fff" sw={1.900}>
            <path d="M144 33Q141 29 142.500 25Q145 20.500 149.500 20.500Q155 21 156.500 26Q157 29 155.500 32" />
            <path d="M147 41V27Q147 25 149 25Q151.500 25 151.500 27V36M151.500 32.500Q155 31 155.500 35V39M155.500 34Q158.500 33 158.500 37V40M158.500 36Q161.500 36 161.500 39V45Q161 51 154 51.500Q149 51 146 45.500L142 41Q144 38.500 147 42.500" />
          </Cell>
          <Cell x={170} y={0} w={30} h={70} color="#fff" sw={2.4}><path d="M180 31.500L185.300 37L190.600 31.500" /></Cell>
          <Cell x={200} y={0} w={127} h={70} color="#fff" sw={2.4}><path d="M217.500 28.500H233M219.500 33.500L225 39L230.500 33.500" /></Cell>
        </QuickTools>
        <SearchBox>
          <Cell x={347} y={7} w={101} h={45} color="#004578" sw={2}>
            <circle cx="407.500" cy="24.500" r="9.400" />
            <path d="M401 31.500L390 43.500" />
          </Cell>
          <Text $ls={-0.25}>Search</Text>
        </SearchBox>
        <WindowButtons>
          <Cell x={1600} y={0} w={90} h={70} color="#fff" sw={2}>
            <path d="M1633 25H1658V44H1633ZM1633 29.500H1658M1645.500 44V31.500M1640.500 36.500L1645.500 31.500L1650.500 36.500" />
          </Cell>
          <Cell x={1690} y={0} w={70} h={70} color="#fff" sw={2}><path d="M1714 35.500H1735" /></Cell>
          <Cell x={1760} y={0} w={80} h={70} color="#fff" sw={2}>
            <path d="M1793 29.500H1808V44H1793ZM1797.500 29V25H1812.500V40H1808" />
          </Cell>
          <Cell x={1840} y={0} w={80} h={70} color="#fff" sw={2}><path d="M1870.500 24.500L1890.500 44.500M1890.500 24.500L1870.500 44.500" /></Cell>
        </WindowButtons>
      </TitleBar>
      <Tabs>
        <Tab $w={41} $gap={55} $ls={0.1}>File</Tab>
        <Tab $active $w={75} $gap={40} $ls={-0.6}>Home</Tab>
        <Tab $w={176} $gap={39} $ls={-0.2}>Send / Receive</Tab>
        <Tab $w={57} $gap={40} $ls={0.11}>View</Tab>
        <Tab $w={60} $gap={0} $ls={0}>Help</Tab>
      </Tabs>
      <RibbonBar />
      <Body>
        <FolderPane />
        <PaneEdge $w={2} $bg="#faf9f8" />
        <Messaging />
        <PaneEdge $w={1} $bg="#fff" />
        <ReadingPane>
          <Cell x={1571} y={493} w={66} h={47} sw={2}><Envelope x={1572} y={495} w={63.500} h={44} /></Cell>
          <Prompt>Select an item to read</Prompt>
          <PreviewLink>Click here to always preview messages</PreviewLink>
        </ReadingPane>
      </Body>
      <StatusBar>
        <StatusText $w={1314} $pl={10} $ls={-0.48}>Filter applied</StatusText>
        <StatusText $w={137} $pl={2} $ls={-0.65}>Connected</StatusText>
        <ViewButton $active>
          <SCell x={1451} w={69} color="#252423" sw={2}>
            <path d="M1472 986H1499V1009.500H1472ZM1472 990.500H1499M1478.500 990.500V1009.500M1492.500 990.500V1009.500" />
          </SCell>
        </ViewButton>
        <ViewButton>
          <SCell x={1520} w={69} color="#444" sw={2}>
            <path d="M1553.500 987Q1552 984 1548 984H1541V1007H1548Q1552 1007 1553.500 1009Q1555 1007 1559 1007H1566V984H1559Q1555 984 1553.500 987V1009" />
            <path d="M1544 989.500H1551M1544 994H1551M1544 998.500H1551M1544 1003H1551M1556.500 989.500H1563.500M1556.500 994H1563.500M1556.500 998.500H1563.500M1556.500 1003H1563.500" strokeWidth="1.800" />
          </SCell>
        </ViewButton>
        <SCell x={1589} w={277} color="#b1afad" sw={1.4}>
          <path d="M1597 997.500H1613M1833 997.500H1849M1841 990V1006" />
          <path d="M1621 998H1825M1723 994V1002" strokeWidth="2" />
        </SCell>
        <StatusText $w={50} $pl={0} $ls={-0.58} $color="#b1afad">10%</StatusText>
      </StatusBar>
      <Tasks />
    </Window>
  );
}
